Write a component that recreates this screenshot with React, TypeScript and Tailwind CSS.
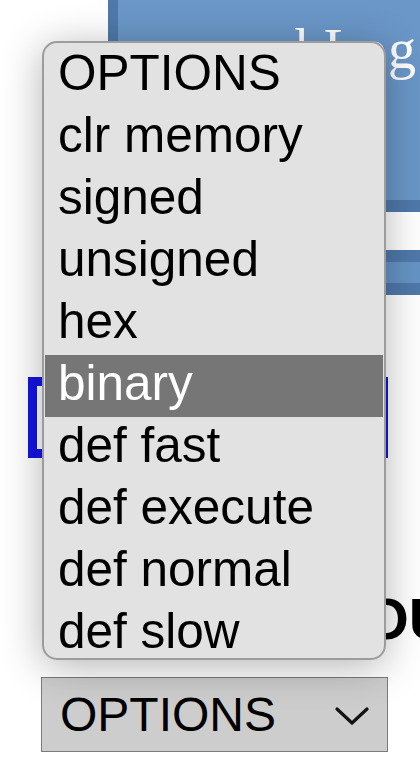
import React from 'react';

const OPTIONS = [
  'OPTIONS',
  'clr memory',
  'signed',
  'unsigned',
  'hex',
  'binary',
  'def fast',
  'def execute',
  'def normal',
  'def slow',
];

export default function App() {
  const selected = 'binary';

  return (
    <div
      className="relative w-[420px] h-[776px] overflow-hidden bg-white"
      style={{ fontFamily: '"Liberation Sans", Arial, sans-serif' }}
    >
      {/* page behind the open menu */}
      <div className="ml-[108px] h-[212px] bg-[#6a97c8] border-l-[10px] border-b-[12px] border-[#4f79aa] pt-[21px] pr-[3px] text-right">
        <span
          className="text-[56px] leading-none text-white tracking-[1px]"
          style={{ fontFamily: '"Liberation Serif", "Times New Roman", serif' }}
        >
          and Log
        </span>
      </div>
      <div className="mt-[38px] ml-[108px] h-[45px] bg-[#6694c6] border-y-[12px] border-[#4f79aa]" />

      <div className="mt-[82px] ml-[28px] w-[360px] h-[81px] border-[9px] border-[#1414e6]" />

      <h2 className="mt-[132px] pl-[325px] h-[58px] text-[58px] leading-none font-bold text-black whitespace-nowrap">
        YOU
      </h2>

      <div className="mt-[29px] ml-[41px] w-[347px] h-[75px] flex items-center justify-between border border-[#7b7b7b] bg-[#cdcdcd] pl-[18px] pr-[18px]">
        <span className="text-[48px] leading-none text-black">OPTIONS</span>
        <svg width="34" height="20" viewBox="0 0 34 20" fill="none" className="mt-[2px]">
          <polyline
            points="2,3 17,17 32,3"
            stroke="#111"
            strokeWidth="3.2"
            strokeLinecap="round"
            strokeLinejoin="round"
          />
        </svg>
      </div>

      {/* open dropdown list */}
      <div className="absolute left-[42px] top-[41px] w-[344px] h-[619px] overflow-hidden rounded-[15px] border-2 border-[#9c9c9c] bg-[#e2e2e2] px-[1px] pt-[2px] shadow-[0_6px_40px_rgba(0,0,0,0.3)]">
        {OPTIONS.map((opt) => (
          <div
            key={opt}
            className={
              opt === selected
                ? 'h-[62px] pl-[13px] text-[49.5px] leading-[56px] whitespace-nowrap bg-[#767676] text-white'
                : 'h-[62px] pl-[13px] text-[49.5px] leading-[56px] whitespace-nowrap text-black'
            }
          >
            {opt}
          </div>
        ))}
      </div>
    </div>
  );
}
